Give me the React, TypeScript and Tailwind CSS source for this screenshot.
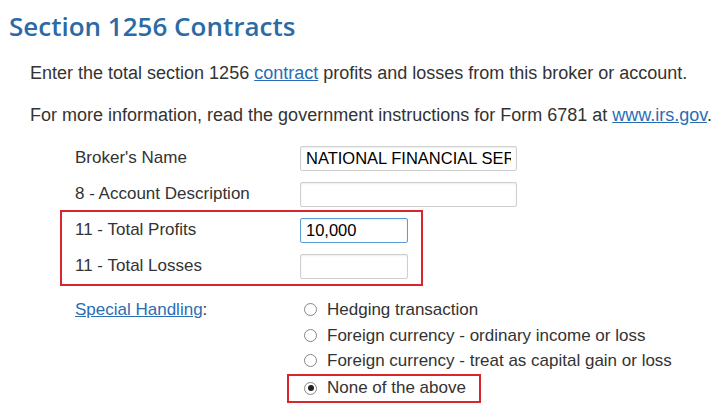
import { useState } from "react";

const body = "font-['Liberation_Sans',Arial,sans-serif]";

const options = [
  "Hedging transaction",
  "Foreign currency - ordinary income or loss",
  "Foreign currency - treat as capital gain or loss",
];

function Row({
  label,
  value,
  wide,
  focused,
}: {
  label: string;
  value: string;
  wide?: boolean;
  focused?: boolean;
}) {
  return (
    <div className="flex h-[36px] items-center">
      <span className="w-[225px] shrink-0 text-[17px] text-[#333]">{label}</span>
      <input
        readOnly
        value={value}
        className={`h-[25px] rounded-[2px] border bg-white px-[5px] text-[16.5px] text-black outline-none shadow-[inset_0_1px_2px_rgba(0,0,0,0.08)] ${
          wide ? "w-[217px]" : "w-[108px]"
        } ${focused ? "border-[#5b9dd9] shadow-[0_0_2px_#8ec0ea]" : "border-[#cfcfcf]"}`}
      />
    </div>
  );
}

export default function App() {
  const [choice, setChoice] = useState(3);

  return (
    <div className={`h-[415px] w-[720px] overflow-hidden bg-white ${body}`}>
      <h1 className="pl-[9px] pt-[8px] font-['Open_Sans',sans-serif] text-[26px] font-semibold leading-[36px] text-[#2c6aa5]">
        Section 1256 Contracts
      </h1>

      <div className="pl-[30px] text-[18px] text-[#333]">
        <p className="mt-[18px] leading-[22px]">
          Enter the total section 1256{" "}
          <a className="text-[#2a6db5] underline">contract</a> profits and losses
          from this broker or account.
        </p>
        <p className="mt-[20px] leading-[22px]">
          For more information, read the government instructions for Form 6781 at{" "}
          <a className="text-[#2a6db5] underline">www.irs.gov</a>.
        </p>
      </div>

      <div className="mt-[14px] pl-[75px]">
        <Row label="Broker's Name" value="NATIONAL FINANCIAL SERVICES" wide />
        <Row label="8 - Account Description" value="" wide />
      </div>

      <div className="ml-[60px] mt-[-2px] w-[363px] border-2 border-[#d9262c] pl-[13px]">
        <Row label="11 - Total Profits" value="10,000" focused />
        <Row label="11 - Total Losses" value="" />
      </div>

      <div className="mt-[11px] flex pl-[75px] text-[17px] text-[#333]">
        <div className="w-[212px] shrink-0 leading-[25px]">
          <a className="text-[#2a6db5] underline">Special Handling</a>:
        </div>
        <div className="flex flex-col">
          {options.map((o, i) => (
            <label
              key={o}
              onClick={() => setChoice(i)}
              className="flex h-[25.5px] items-center gap-[10px] pl-[17px]"
            >
              <Radio on={choice === i} />
              {o}
            </label>
          ))}
          <label
            onClick={() => setChoice(3)}
            className="flex h-[29px] w-[194px] items-center gap-[10px] whitespace-nowrap border-2 border-[#d9262c] pl-[15px]"
          >
            <Radio on={choice === 3} />
            None of the above
          </label>
        </div>
      </div>
    </div>
  );
}

function Radio({ on }: { on: boolean }) {
  return (
    <span className="flex h-[13px] w-[13px] shrink-0 items-center justify-center rounded-full border border-[#888] bg-white">
      {on && <span className="h-[6px] w-[6px] rounded-full bg-[#222]" />}
    </span>
  );
}
